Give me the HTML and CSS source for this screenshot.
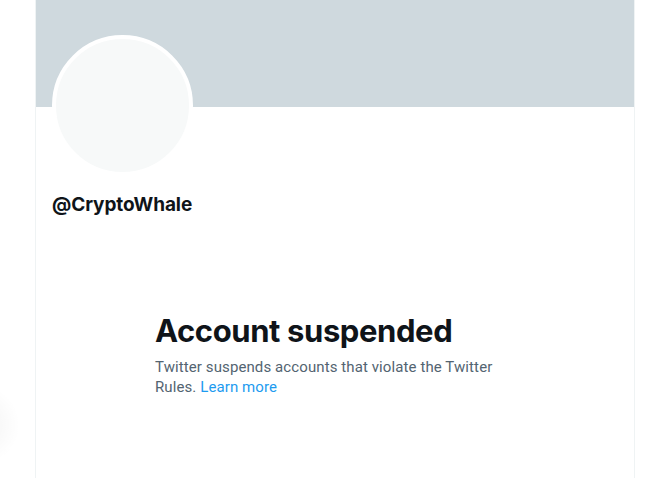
FILE: index.html
```html
<!DOCTYPE html>
<html lang="en">
<head>
    <meta charset="UTF-8">
    <meta name="viewport" content="width=device-width, initial-scale=1.0">
    <title>@CryptoWhale</title>
    <link rel="stylesheet" href="styles.css">
</head>
<body>
    <div class="toast-shadow"></div>
    <main class="column">
        <div class="banner"></div>
        <div class="profile">
            <div class="avatar"></div>
            <div class="handle">@CryptoWhale</div>
        </div>
        <div class="empty-state">
            <h1>Account suspended</h1>
            <p>Twitter suspends accounts that violate the Twitter Rules. <a href="#">Learn more</a></p>
        </div>
    </main>
</body>
</html>
```

FILE: styles.css
```css
body {
    margin: 0;
    padding: 0;
    background-color: #ffffff;
    font-family: "Roboto", "Liberation Sans", sans-serif;
    color: #0f1419;
    overflow: hidden;
}

.column {
    width: 598px;
    margin-left: 35px;
    min-height: 100vh;
    border-left: 1px solid #eff3f4;
    border-right: 1px solid #eff3f4;
}

.banner {
    height: 107px;
    background-color: #cfd9de;
}

.profile {
    padding: 0 16px;
}

.avatar {
    width: 133px;
    height: 133px;
    margin-top: -72px;
    border: 4px solid #ffffff;
    border-radius: 50%;
    background-color: #f7f9f9;
}

.handle {
    margin-top: 17px;
    font-family: "Inter", "Liberation Sans", sans-serif;
    font-size: 19px;
    font-weight: 700;
    line-height: 24px;
    letter-spacing: -0.1px;
}

.empty-state {
    max-width: 360px;
    margin: 96px auto 0;
    padding: 0 20px;
}

.empty-state h1 {
    margin: 0 0 8px;
    font-family: "Inter", "Liberation Sans", sans-serif;
    font-size: 31px;
    font-weight: 700;
    line-height: 36px;
    letter-spacing: -0.4px;
}

.empty-state p {
    margin: 0;
    font-size: 15px;
    line-height: 20px;
    letter-spacing: 0.1px;
    color: #536471;
}

.empty-state a {
    color: #1d9bf0;
    text-decoration: none;
}

.toast-shadow {
    position: absolute;
    left: -60px;
    top: 385px;
    width: 80px;
    height: 80px;
    border-radius: 50%;
    background: radial-gradient(closest-side, rgba(0, 0, 0, 0.05), rgba(0, 0, 0, 0));
}
```
